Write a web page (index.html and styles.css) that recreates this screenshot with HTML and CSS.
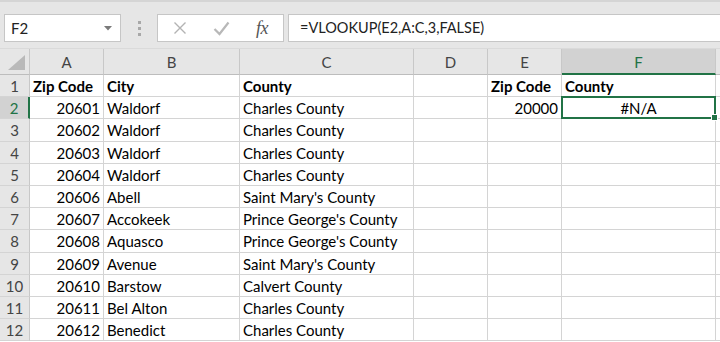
FILE: index.html
```html
<!DOCTYPE html>
<html>
<head>
<meta charset="utf-8">
<link rel="stylesheet" href="styles.css">
</head>
<body>
<div class="toolbar">
  <div class="namebox">
    <span class="name">F2</span>
    <svg class="caret" width="8" height="5" viewBox="0 0 8 5"><path d="M0 0h8L4 4.5z" fill="#7a7a7a"/></svg>
  </div>
  <div class="grip"><i></i><i></i><i></i></div>
  <div class="fbtns">
    <svg class="ico" width="14" height="14" viewBox="0 0 14 14"><path d="M1.5 1.5l11 11M12.5 1.5l-11 11" stroke="#b3b3b3" stroke-width="1.4" fill="none"/></svg>
    <svg class="ico" width="17" height="15" viewBox="0 0 17 15"><path d="M1.5 8l5 5 9-11.5" stroke="#b8b8b8" stroke-width="2.2" fill="none"/></svg>
    <span class="fx">fx</span>
  </div>
  <div class="formula">=VLOOKUP(E2,A:C,3,FALSE)</div>
</div>
<div class="sheet">
  <div class="ch corner"><svg width="18" height="15" viewBox="0 0 18 15"><path d="M17 0V15H0z" fill="#b9b9b9"/></svg></div>
  <div class="ch">A</div><div class="ch">B</div><div class="ch">C</div><div class="ch">D</div><div class="ch">E</div><div class="ch sel">F</div><div class="ch"></div>

  <div class="rh">1</div><div class="c b">Zip Code</div><div class="c b">City</div><div class="c b">County</div><div class="c"></div><div class="c b">Zip Code</div><div class="c b">County</div><div class="c"></div>

  <div class="rh rsel">2</div><div class="c n">20601</div><div class="c">Waldorf</div><div class="c">Charles County</div><div class="c"></div><div class="c n">20000</div><div class="c active">#N/A<span class="handle"></span></div><div class="c"></div>

  <div class="rh">3</div><div class="c n">20602</div><div class="c">Waldorf</div><div class="c">Charles County</div><div class="c"></div><div class="c"></div><div class="c"></div><div class="c"></div>

  <div class="rh">4</div><div class="c n">20603</div><div class="c">Waldorf</div><div class="c">Charles County</div><div class="c"></div><div class="c"></div><div class="c"></div><div class="c"></div>

  <div class="rh">5</div><div class="c n">20604</div><div class="c">Waldorf</div><div class="c">Charles County</div><div class="c"></div><div class="c"></div><div class="c"></div><div class="c"></div>

  <div class="rh">6</div><div class="c n">20606</div><div class="c">Abell</div><div class="c">Saint Mary's County</div><div class="c"></div><div class="c"></div><div class="c"></div><div class="c"></div>

  <div class="rh">7</div><div class="c n">20607</div><div class="c">Accokeek</div><div class="c">Prince George's County</div><div class="c"></div><div class="c"></div><div class="c"></div><div class="c"></div>

  <div class="rh">8</div><div class="c n">20608</div><div class="c">Aquasco</div><div class="c">Prince George's County</div><div class="c"></div><div class="c"></div><div class="c"></div><div class="c"></div>

  <div class="rh">9</div><div class="c n">20609</div><div class="c">Avenue</div><div class="c">Saint Mary's County</div><div class="c"></div><div class="c"></div><div class="c"></div><div class="c"></div>

  <div class="rh">10</div><div class="c n">20610</div><div class="c">Barstow</div><div class="c">Calvert County</div><div class="c"></div><div class="c"></div><div class="c"></div><div class="c"></div>

  <div class="rh">11</div><div class="c n">20611</div><div class="c">Bel Alton</div><div class="c">Charles County</div><div class="c"></div><div class="c"></div><div class="c"></div><div class="c"></div>

  <div class="rh">12</div><div class="c n">20612</div><div class="c">Benedict</div><div class="c">Charles County</div><div class="c"></div><div class="c"></div><div class="c"></div><div class="c"></div>
</div>
</body>
</html>
```
FILE: styles.css
```css
html, body {
  margin: 0;
  padding: 0;
  width: 720px;
  height: 342px;
  overflow: hidden;
  background: #ffffff;
  font-family: Lato, "Liberation Sans", sans-serif;
  color: #000;
}

.toolbar {
  height: 49px;
  box-sizing: border-box;
  background: #e6e6e6;
  border-top: 2px solid #d5d5d5;
  padding: 12px 0 0 4px;
  display: flex;
  align-items: flex-start;
  border-bottom: 1px solid #dadada;
}

.namebox {
  width: 117px;
  height: 28px;
  box-sizing: border-box;
  background: #fff;
  border: 1px solid #c6c6c6;
  display: flex;
  align-items: center;
  justify-content: space-between;
  padding: 0 8px 0 6px;
  font-size: 15px;
  color: #222;
}

.caret { margin-top: 1px; }

.grip {
  width: 36px;
  height: 28px;
  display: flex;
  flex-direction: column;
  align-items: center;
  justify-content: center;
  gap: 3px;
}
.grip i {
  display: block;
  width: 3px;
  height: 3px;
  background: #a8a8a8;
}

.fbtns {
  width: 127px;
  height: 28px;
  box-sizing: border-box;
  background: #fff;
  border: 1px solid #c6c6c6;
  display: flex;
  align-items: center;
  justify-content: space-between;
  padding: 0 15px 0 15px;
}

.fx {
  font-family: "Liberation Serif", serif;
  font-style: italic;
  font-size: 18px;
  color: #555;
  letter-spacing: -0.5px;
}

.formula {
  flex: 1;
  margin-left: 4px;
  height: 28px;
  box-sizing: border-box;
  background: #fff;
  border: 1px solid #c6c6c6;
  border-right: none;
  padding-left: 11px;
  line-height: 26px;
  font-size: 14.5px;
  color: #222;
}

.sheet {
  display: grid;
  grid-template-columns: 30px 74px 136px 174px 74px 74px 154px 1fr;
  grid-template-rows: 26px;
  grid-auto-rows: 22.2px;
  font-size: 15px;
}

.ch {
  background: #e6e6e6;
  border-right: 1px solid #c8c8c8;
  border-bottom: 1px solid #bdbdbd;
  box-sizing: border-box;
  text-align: center;
  line-height: 26px;
  color: #444;
  font-size: 15px;
}
.ch.corner {
  display: flex;
  align-items: flex-end;
  justify-content: flex-end;
  padding: 0 3px 4px 0;
}
.ch.sel {
  background: #d2d2d2;
  border-bottom: 2px solid #217346;
  color: #217346;
}

.rh {
  background: #e6e6e6;
  border-right: 1px solid #c8c8c8;
  border-bottom: 1px solid #d4d4d4;
  box-sizing: border-box;
  text-align: center;
  color: #444;
  line-height: 22px;
  font-size: 15px;
}
.rh.rsel {
  background: #d2d2d2;
  border-right: 2px solid #217346;
  color: #217346;
}

.c {
  border-right: 1px solid #d4d4d4;
  border-bottom: 1px solid #d4d4d4;
  box-sizing: border-box;
  padding: 0 3px;
  line-height: 22px;
  white-space: nowrap;
  overflow: visible;
}
.c.b { font-weight: bold; }
.c.n { text-align: right; }

.c.active {
  position: relative;
  text-align: center;
  border: 2px solid #217346;
  margin: -1px 0 0 -1px;
  line-height: 20px;
}
.handle {
  position: absolute;
  right: -4px;
  bottom: -4px;
  width: 5px;
  height: 5px;
  background: #217346;
  border: 1px solid #fff;
}
```
